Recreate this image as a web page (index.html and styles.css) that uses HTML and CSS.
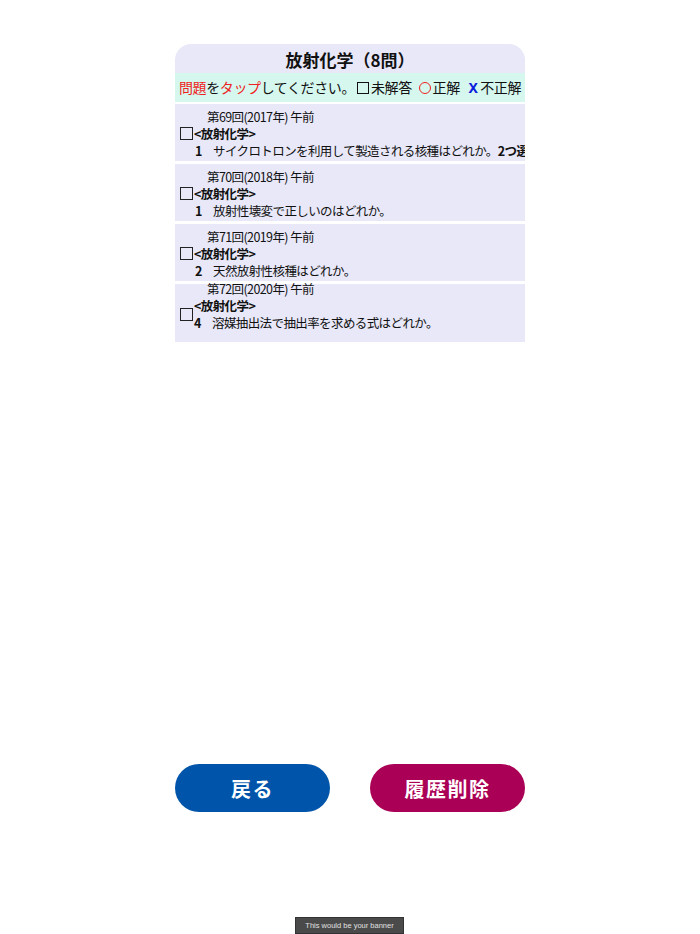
FILE: index.html
```html
<!DOCTYPE html>
<html lang="ja">
<head>
<meta charset="utf-8">
<link rel="stylesheet" href="styles.css">
</head>
<body>
<div class="page">
  <div class="panel">
    <div class="title">放射化学（8問）</div>
    <div class="guide"><span class="red">問題</span>を<span class="red">タップ</span>してください。<span class="sq"></span>未解答 <span class="circle"></span>正解 <span class="x">X</span> 不正解</div>
    <div class="list">
      <div class="item">
        <div class="meta">第69回(2017年) 午前</div>
        <div class="row"><span class="box"></span><b>&lt;放射化学&gt;</b></div>
        <div class="q"><b class="num">1</b><span>サイクロトロンを利用して製造される核種はどれか。<b>2つ選べ。</b></span></div>
      </div>
      <div class="item">
        <div class="meta">第70回(2018年) 午前</div>
        <div class="row"><span class="box"></span><b>&lt;放射化学&gt;</b></div>
        <div class="q"><b class="num">1</b><span>放射性壊変で正しいのはどれか。</span></div>
      </div>
      <div class="item">
        <div class="meta">第71回(2019年) 午前</div>
        <div class="row"><span class="box"></span><b>&lt;放射化学&gt;</b></div>
        <div class="q"><b class="num">2</b><span>天然放射性核種はどれか。</span></div>
      </div>
      <div class="item item-alt">
        <div class="meta">第72回(2020年) 午前</div>
        <div class="split">
          <span class="box"></span>
          <div class="lines">
            <b class="cat">&lt;放射化学&gt;</b>
            <div class="q2"><b class="num2">4</b><span>溶媒抽出法で抽出率を求める式はどれか。</span></div>
          </div>
        </div>
      </div>
    </div>
  </div>
  <div class="actions">
    <button class="btn back">戻る</button>
    <button class="btn del">履歴削除</button>
  </div>
  <div class="banner">This would be your banner</div>
</div>
</body>
</html>
```

FILE: styles.css
```css
html, body {
  margin: 0;
  padding: 0;
  background: #ffffff;
}
body {
  font-family: "Noto Sans CJK JP", "Noto Sans", sans-serif;
  color: #111;
}
.page {
  width: 700px;
  height: 934px;
  position: relative;
  display: flex;
  flex-direction: column;
  align-items: center;
}
.panel {
  width: 350px;
  margin-top: 44px;
}
.title {
  background: #e8e8f8;
  border-radius: 16px 16px 0 0;
  height: 29px;
  line-height: 31px;
  text-align: center;
  font-size: 17px;
  font-weight: bold;
}
.guide {
  background: #d6f7ee;
  height: 29px;
  line-height: 29px;
  font-size: 14px;
  padding-left: 4px;
  white-space: nowrap;
  overflow: hidden;
  letter-spacing: -0.4px;
}
.red { color: #ee2222; }
.sq {
  display: inline-block;
  width: 10px;
  height: 10px;
  border: 1.4px solid #111;
  vertical-align: -1px;
  margin: 0 2px 0 2px;
}
.circle {
  display: inline-block;
  width: 10px;
  height: 10px;
  border: 1.5px solid #ee2222;
  border-radius: 50%;
  vertical-align: -1px;
  margin: 0 2px 0 4px;
}
.x {
  color: #0a22dd;
  font-weight: bold;
  font-family: "Noto Sans", sans-serif;
  margin-left: 6px;
}
.list {
  margin-top: 2px;
  display: flex;
  flex-direction: column;
  gap: 3px;
}
.item {
  background: #e8e8f8;
  height: 57px;
  padding-top: 4px;
  box-sizing: border-box;
  font-size: 12.5px;
  letter-spacing: -0.6px;
  line-height: 17px;
  white-space: nowrap;
  overflow: hidden;
}
.meta {
  padding-left: 32px;
}
.row {
  display: flex;
  align-items: center;
  padding-left: 5px;
}
.box {
  display: inline-block;
  width: 11px;
  height: 11px;
  border: 1.5px solid #222;
  flex: none;
  margin-right: 1px;
}
.row b, .cat {
  font-weight: bold;
}
.q {
  display: flex;
  padding-left: 20px;
}
.num {
  width: 18px;
  flex: none;
}
.item-alt {
  height: 58px;
  padding-top: 0;
  overflow: visible;
}
.item-alt .meta {
  margin-top: -4px;
}
.split {
  display: flex;
  align-items: center;
  padding-left: 5px;
}
.lines {
  display: flex;
  flex-direction: column;
}
.q2 {
  display: flex;
}
.num2 {
  width: 18px;
  flex: none;
}
.actions {
  width: 350px;
  margin-top: 422px;
  display: flex;
  justify-content: space-between;
}
.btn {
  width: 155px;
  height: 48px;
  border: none;
  border-radius: 24px;
  color: #fff;
  font-family: "Noto Sans CJK JP", sans-serif;
  font-size: 20px;
  font-weight: bold;
  letter-spacing: 1.5px;
}
.back { background: #0055aa; }
.del { background: #aa0055; }
.banner {
  position: absolute;
  left: 295px;
  top: 917px;
  width: 109px;
  height: 17px;
  box-sizing: border-box;
  background: #4a4a4a;
  border: 1px solid #333;
  color: #e0e0e0;
  font-family: "Liberation Sans", Arial, sans-serif;
  font-size: 7.5px;
  line-height: 15px;
  text-align: center;
}
```
